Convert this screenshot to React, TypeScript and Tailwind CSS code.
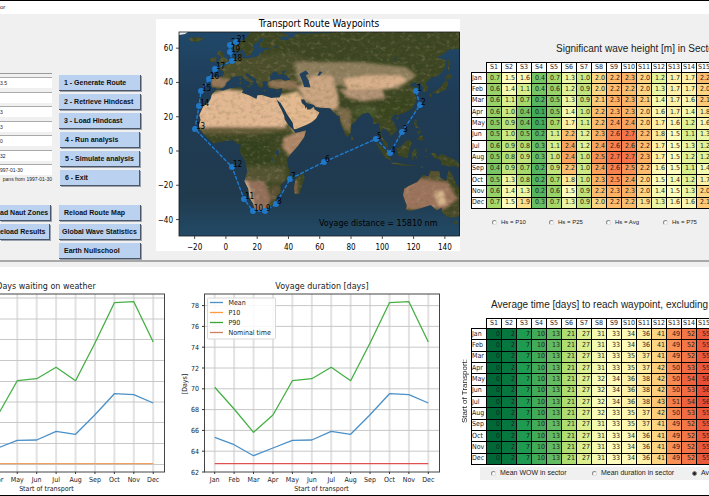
import React from "react";

type Point = [number, number];

const MONTHS = ["Jan", "Feb", "Mar", "Apr", "May", "Jun", "Jul", "Aug", "Sep", "Oct", "Nov", "Dec"];
const SECTORS = Array.from({ length: 15 }, (_, i) => `S${i + 1}`);

const WAVE_HEIGHT: number[][] = [
  [0.7, 1.5, 1.6, 0.4, 0.7, 1.3, 1.0, 2.0, 2.2, 2.3, 2.0, 1.2, 1.7, 1.7, 2.2],
  [0.6, 1.4, 1.1, 0.4, 0.6, 1.2, 0.9, 2.0, 2.2, 2.2, 2.0, 1.3, 1.7, 1.7, 2.0],
  [0.6, 1.1, 0.7, 0.2, 0.5, 1.3, 0.9, 2.1, 2.3, 2.3, 2.1, 1.4, 1.7, 1.6, 2.1],
  [0.6, 1.0, 0.4, 0.1, 0.5, 1.4, 1.0, 2.2, 2.3, 2.3, 2.0, 1.6, 1.7, 1.4, 1.8],
  [0.5, 0.9, 0.4, 0.1, 0.7, 1.7, 1.1, 2.2, 2.4, 2.4, 2.0, 1.7, 1.6, 1.2, 1.6],
  [0.5, 1.0, 0.5, 0.2, 1.1, 2.2, 1.2, 2.3, 2.6, 2.7, 2.2, 1.8, 1.5, 1.1, 1.3],
  [0.6, 0.9, 0.8, 0.3, 1.1, 2.4, 1.2, 2.4, 2.6, 2.6, 2.2, 1.7, 1.5, 1.3, 1.2],
  [0.5, 0.8, 0.9, 0.3, 1.0, 2.4, 1.0, 2.5, 2.7, 2.7, 2.3, 1.7, 1.5, 1.2, 1.2],
  [0.4, 0.9, 0.7, 0.2, 0.9, 2.2, 1.0, 2.4, 2.6, 2.5, 2.2, 1.6, 1.5, 1.1, 1.4],
  [0.5, 1.3, 0.8, 0.2, 0.7, 1.8, 1.0, 2.3, 2.5, 2.4, 2.0, 1.5, 1.4, 1.2, 1.7],
  [0.6, 1.4, 1.3, 0.2, 0.6, 1.5, 0.9, 2.2, 2.3, 2.3, 2.0, 1.4, 1.5, 1.3, 2.0],
  [0.7, 1.5, 1.9, 0.3, 0.7, 1.3, 0.9, 2.0, 2.2, 2.2, 1.9, 1.3, 1.6, 1.6, 2.1],
];

const FIRST_SECTORS = [0, 2, 7, 10, 13, 21, 27];
const TRAVEL_TIME: number[][] = [
  [31, 33, 34, 36, 41, 49, 52, 55],
  [31, 33, 34, 36, 41, 49, 52, 55],
  [31, 33, 35, 37, 41, 49, 52, 55],
  [31, 33, 35, 37, 42, 50, 53, 55],
  [32, 34, 36, 38, 42, 50, 54, 56],
  [32, 34, 36, 38, 42, 50, 53, 56],
  [32, 34, 36, 38, 43, 51, 54, 56],
  [32, 33, 35, 37, 42, 50, 53, 55],
  [31, 33, 35, 37, 41, 49, 52, 55],
  [31, 33, 34, 36, 41, 49, 52, 55],
  [31, 33, 34, 36, 41, 49, 52, 55],
  [31, 33, 34, 36, 41, 49, 52, 55],
].map((row) => [...FIRST_SECTORS, ...row]);

// Green-yellow-red ramp, one stop per tenth.
const RAMP: [number, number, number][] = [
  [0, 104, 55],
  [26, 152, 80],
  [102, 189, 99],
  [166, 217, 106],
  [217, 239, 139],
  [255, 255, 191],
  [254, 224, 139],
  [253, 174, 97],
  [244, 109, 67],
  [215, 48, 39],
  [165, 0, 38],
];

function rampColor(t: number): string {
  const s = Math.max(0, Math.min(0.999, t)) * 10;
  const i = Math.floor(s);
  const c = RAMP[i].map((v, k) => Math.round(v + (RAMP[i + 1][k] - v) * (s - i)));
  return `rgb(${c.join(",")})`;
}

function HeatTable({
  label,
  rows,
  format,
  scale,
}: {
  label: string;
  rows: number[][];
  format: (v: number) => string;
  scale: (v: number) => number;
}) {
  return (
    <table
      aria-label={label}
      className="h-[147px] w-[241px] shrink-0 table-fixed border-collapse font-['DejaVu_Sans_Condensed','DejaVu_Sans',sans-serif] text-[7px] leading-[9px] text-[#222]"
    >
      <thead>
        <tr>
          <td className="p-0" />
          {SECTORS.map((s) => (
            <th key={s} scope="col" className="border border-black bg-white p-0 text-center font-normal">
              {s}
            </th>
          ))}
        </tr>
      </thead>
      <tbody>
        {rows.map((row, r) => (
          <tr key={MONTHS[r]}>
            <th scope="row" className="border border-black bg-white p-0 text-left font-normal">
              {MONTHS[r]}
            </th>
            {row.map((v, c) => (
              <td
                key={c}
                className="border border-black p-0 pr-px text-right"
                style={{ backgroundColor: rampColor(scale(v)) }}
              >
                {format(v)}
              </td>
            ))}
          </tr>
        ))}
      </tbody>
    </table>
  );
}

const lonX = (lon: number) => 69.9 + 1.564 * lon;
const latY = (lat: number) => 132 - 1.714 * lat;
const shape = (pts: Point[]) =>
  "M" + pts.map(([a, b]) => `${lonX(a).toFixed(1)} ${latY(b).toFixed(1)}`).join("L") + "Z";

const LAND: Point[][] = [
  [
    [-9, 37], [-9.5, 39], [-9, 43], [-2, 43.5], [-1, 46], [-4.5, 48.5], [-1.5, 49.5], [1.5, 50.5], [4, 52], [5, 53.3],
    [8, 54], [8.5, 57], [10.5, 57.5], [10, 55], [11, 54], [14, 54], [18, 54.7], [21, 55.5], [21.5, 57.5], [24, 57.5],
    [24, 59], [28, 59.7], [30, 60], [25, 60.2], [22.5, 60.2], [21.5, 61.5], [21.5, 63], [25, 65], [22, 65.8], [21, 64],
    [17.5, 62], [17, 60.5], [18.5, 59.5], [16.5, 57.5], [16, 56], [13, 55.5], [11.5, 58], [10.5, 59.3], [8, 58],
    [5.5, 59], [5, 61.5], [9, 63.8], [13, 66], [15, 68.5], [18, 71], [32, 71], [41, 67], [35, 66.5], [33, 67],
    [37, 64.5], [40, 65], [40, 66], [44, 66.5], [44, 68.5], [54, 68.5], [60, 69], [67, 69], [72, 71], [150, 71],
    [150, 59.5], [143, 59.3], [138, 56], [135, 54.7], [141, 53], [140.5, 49], [138, 46], [135, 43.5], [132, 43],
    [130.5, 42.3], [129.5, 40.8], [127.5, 39.7], [129.4, 37], [129, 35.2], [126.3, 34.5], [126.5, 37.5], [125, 38],
    [124.5, 39.8], [121.5, 38.9], [122, 40.5], [118, 39], [119, 37.3], [122.5, 37.2], [119.5, 35], [121.8, 31.5],
    [121.8, 29], [119.5, 25.5], [117, 23.5], [113.5, 22.2], [110, 21], [108, 21.6], [105.8, 19], [107.5, 16.5],
    [109.2, 13], [109, 11.5], [106.7, 10], [104.8, 8.6], [105, 10.3], [102.5, 12.2], [100.8, 13.4], [100, 12.5],
    [99.3, 10], [100.5, 7.3], [103.3, 4.5], [103.5, 2.5], [104, 1.3], [101.5, 3], [100.3, 5.5], [98.5, 8], [98.7, 12],
    [97.7, 16.5], [95.5, 15.8], [94.3, 16], [94, 19], [92, 21.5], [91, 22.5], [87, 21.5], [85, 19.7], [82.2, 16.7],
    [80.2, 15.5], [80, 13], [79.8, 10.3], [78, 8.2], [76.5, 9], [74.8, 13], [73, 17], [72.7, 20.5], [70.5, 20.8],
    [69, 22.3], [66.7, 25], [61.5, 25.2], [57.5, 25.7], [56, 27], [51.5, 28], [50, 30.2], [48, 30], [48.5, 28],
    [50.3, 26.5], [51, 24.5], [51.5, 26], [52, 24.2], [54, 24.2], [56.2, 26], [56.7, 24.2], [59.8, 22.5], [57.7, 19],
    [55, 17], [52, 15.5], [45, 12.9], [43.4, 12.7], [42.7, 16.5], [39, 21.5], [37, 25], [35, 28], [32.5, 29.9],
    [32.5, 31.2], [34.3, 31.3], [36, 34.5], [36, 36.8], [32.5, 36], [30.5, 36.5], [27.5, 36.8], [26.3, 39],
    [27, 40.5], [29, 41.2], [32, 41.8], [35, 42], [38, 41], [41.5, 41.6], [39, 43.8], [37, 45], [39, 47.2],
    [35, 46.2], [36.5, 45.3], [34, 44.4], [33, 46], [31, 46.6], [29, 45], [28, 43.5], [28.5, 41.5], [26.5, 40.7],
    [24, 40.7], [23, 40.3], [24, 38], [22.5, 36.5], [21.3, 37.5], [19.5, 40], [19.4, 42], [15.5, 44], [13.7, 45.5],
    [12.3, 45], [13.5, 43.5], [16, 41.8], [18.4, 40], [16.8, 40.4], [17, 39], [15.8, 38], [15.6, 40], [12.5, 41.5],
    [10.3, 43.8], [7, 43.6], [3.2, 43], [3, 41.7], [0.3, 40], [-0.5, 38], [-2, 36.8], [-5.5, 36.1], [-6.5, 37],
  ],
  [
    [-6, 35.8], [-2, 35.2], [3, 36.8], [10, 37.3], [11, 35.5], [10.2, 34], [15, 32.4], [19.5, 30.4], [20.2, 32.5],
    [23, 32.7], [29, 31], [32.3, 31.3], [32.5, 29.8], [34, 26.5], [35.7, 23.8], [37.3, 20.5], [37.5, 18.5], [40, 15],
    [43, 12.3], [44.5, 10.5], [51.2, 11.9], [50, 8], [46, 3], [41.5, -1.8], [39, -5], [39.5, -8], [40.6, -11],
    [40.6, -15], [37, -18], [34.8, -20], [35.5, -24], [32.8, -26], [31, -30], [28, -33], [25, -34], [20, -34.8],
    [18.3, -34], [17.5, -31], [15, -27], [14.3, -22], [11.8, -17.5], [13.7, -12], [13, -8], [12, -5], [9, -1],
    [9.5, 3.8], [7, 4.4], [4.5, 6.3], [1, 6], [-4, 5.2], [-7.5, 4.4], [-11, 6.8], [-13.2, 9], [-16.7, 12.5],
    [-17.4, 14.7], [-16.2, 18], [-17, 21], [-14.5, 26], [-11, 28.5], [-9.7, 30.5], [-9, 33],
  ],
  [[49.3, -12], [50.4, -15.7], [47, -25], [44, -25], [43.5, -21.5], [44.5, -16.3]],
  [[-5.5, 50], [1.3, 51.3], [1.7, 52.8], [-1, 54.5], [-2, 57.5], [-4, 58.6], [-6, 57], [-3, 54.5], [-5, 52], [-3, 51.5]],
  [[-10, 52], [-6.3, 52.3], [-6, 55], [-10, 54]],
  [[-24, 65.5], [-22, 66.3], [-16, 66.4], [-14, 65], [-19, 63.5], [-22.5, 64]],
  [
    [114, -22], [113.3, -26], [115.7, -32], [115, -34.2], [118, -35], [124, -33.5], [131, -31.5], [135, -34.8],
    [138, -33], [138, -35.5], [141, -38.2], [146.3, -39], [150, -37.5], [150, -22.5], [147, -19.2], [145.5, -15],
    [142.5, -11], [140.8, -17.5], [137, -15.5], [136.5, -12], [131, -11.5], [129.5, -15], [126, -14], [122.3, -18],
    [117, -20.5],
  ],
  [[145, -41], [148, -41], [147, -43.5]],
  [[131, -1], [134, -1], [135, -3.3], [138, -1.7], [144, -4], [148, -6], [150, -10], [146, -8.7], [143, -9], [138, -8], [137, -5], [133, -4]],
  [[109, 1.5], [111.5, 2.5], [116.8, 7], [119, 5], [117.5, 1], [116, -4], [110.3, -3]],
  [[95.3, 5.6], [100, 2.5], [104, -2], [106, -5.8], [102, -4], [98, 1.5]],
  [[105.3, -6.8], [108.5, -6.7], [114.5, -7.8], [123, -8.4], [114.4, -8.8], [106.5, -7.6]],
  [[119, -5.5], [119, -1], [120.5, 1], [125, 1.5], [121, 0.3], [123, -1], [121.5, -2], [122.5, -5], [120.5, -3]],
  [[127.5, 2], [128.5, 1], [128, -1], [127.5, 0]],
  [[126, -3], [130.5, -3.2], [128, -3.6]],
  [[124, -9.8], [127, -8.6], [125, -9.8]],
  [[120.3, 16], [121, 18.5], [122, 18.3], [121.8, 15], [124, 13], [120.8, 13.8]],
  [[122, 7], [125.5, 9.5], [126.3, 7], [125.3, 5.8]],
  [[122, 11.5], [125, 12], [124, 10], [122.5, 10]],
  [[131, 34], [135, 35.6], [137, 37.3], [140, 40.5], [141.5, 41.3], [142, 39.5], [140.7, 35.7], [137, 34.6], [135.5, 33.6]],
  [[130, 33.5], [132, 33], [131, 31.2], [130, 32]],
  [[140, 41.6], [141.7, 45.4], [145, 43.5], [143, 42]],
  [[142, 46], [142, 53.5], [143.5, 52], [143, 49]],
  [[120, 23], [121.5, 25.2], [121, 22]],
  [[108.7, 19.5], [111, 20], [109.5, 18.2]],
  [[80, 9.7], [81.8, 7], [80.3, 6]],
  [[8.3, 39], [9.7, 41], [9.5, 39]],
  [[8.7, 42], [9.4, 43], [9.4, 41.5]],
  [[12.5, 38], [15.5, 38.2], [15, 36.8]],
  [[23.6, 35.5], [26.3, 35.3], [24.8, 34.9]],
  [[32.4, 35], [34.5, 35.5], [33, 34.6]],
];
const LAND_PATH = LAND.map(shape).join("");

const WATER: Point[][] = [
  [[47, 45], [51, 47], [53, 45.3], [51, 44], [53, 41], [54, 37], [50, 37.3], [49, 40.5]],
  [[31.7, 0.3], [34, 0.4], [33.5, -2.5], [31.8, -2.3]],
  [[103.8, 51.5], [107, 52.5], [109.8, 55.7], [108.5, 53]],
  [[58.5, 44], [60, 46.5], [61.5, 46], [60, 44]],
  [[30, 60], [32, 61.6], [33, 60.3]],
  [[29.3, -4], [30.5, -8.7], [30.8, -8.3], [29.8, -4]],
];
const WATER_PATH = WATER.map(shape).join("");

// Vegetation and desert patches, drawn soft and clipped to the coastline.
const TERRAIN: { color: string; pts: Point[] }[] = [
  { color: "#4a4d2c", pts: [[-10, 55], [45, 57], [60, 50], [45, 42], [25, 38], [-10, 40]] },
  { color: "#8f7f5e", pts: [[44, 52], [85, 52], [115, 49], [122, 44], [110, 36], [76, 38], [46, 40]] },
  { color: "#97795a", pts: [[-10, 43], [2, 42], [0, 37], [-9, 37]] },
  { color: "#927656", pts: [[27, 41], [44, 41], [48, 36], [36, 36], [28, 37]] },
  { color: "#e2b893", pts: [[-20, 14], [-20, 24], [-12, 33], [0, 36], [12, 35], [20, 34], [36, 33], [42, 20], [38, 14], [20, 14]] },
  { color: "#e4b98f", pts: [[33, 32], [46, 35], [52, 27], [62, 23], [56, 14], [43, 11], [38, 20]] },
  { color: "#cba582", pts: [[46, 37], [56, 44], [68, 44], [72, 32], [72, 24], [60, 24], [50, 30]] },
  { color: "#d8b08b", pts: [[75, 42], [90, 44], [112, 44], [116, 41], [104, 36], [92, 36], [78, 35]] },
  { color: "#b29275", pts: [[72, 36], [80, 36], [100, 36], [102, 31], [88, 29], [78, 31]] },
  { color: "#7b6b49", pts: [[70, 26], [80, 24], [80, 12], [76, 12], [73, 18]] },
  { color: "#46542a", pts: [[80, 24], [90, 27], [98, 24], [94, 20], [84, 20]] },
  { color: "#39441f", pts: [[98, 30], [118, 31], [121, 25], [108, 21], [98, 20]] },
  { color: "#655c39", pts: [[-18, 14], [38, 14], [40, 12], [20, 10], [-16, 10]] },
  { color: "#333f1d", pts: [[8, 6], [28, 6], [30, -6], [18, -8], [9, -2]] },
  { color: "#525231", pts: [[12, -9], [38, -9], [38, -18], [12, -18]] },
  { color: "#b08869", pts: [[37, 8], [46, 11], [54, 13], [48, 2], [41, -3], [36, 2]] },
  { color: "#94705a", pts: [[12, -17], [25, -18], [29, -28], [25, -36], [16, -35]] },
  { color: "#d6b496", pts: [[10, -17], [14, -18], [17, -28], [18, -33], [14, -30]] },
  { color: "#5b5134", pts: [[29, -20], [35, -20], [32, -30], [28, -28]] },
  { color: "#80634a", pts: [[43, -16], [46, -17], [46, -26], [43, -26]] },
  { color: "#9c735c", pts: [[110, -19], [125, -16], [142, -18], [148, -28], [140, -34], [114, -34]] },
  { color: "#d8b48c", pts: [[133, -24], [139, -23], [141, -31], [136, -32]] },
  { color: "#58512f", pts: [[125, -11], [143, -11], [142, -15], [128, -16]] },
  { color: "#464a2a", pts: [[140, -38], [150, -39], [150, -25], [147, -32]] },
];

const WAYPOINTS: Point[] = [
  [260, 72], [264, 86], [246, 113], [234, 134], [220, 120], [168, 143], [134, 160], [120, 185], [109, 192], [97, 192],
  [88, 180], [76, 148], [39, 110], [43, 87], [45, 72], [53, 60], [59, 50], [76, 42], [74, 33], [74, 26], [80, 23],
];

function RouteMap() {
  return (
    <svg
      viewBox="0 0 304 232"
      role="img"
      aria-label="Transport Route Waypoints"
      className="block w-full bg-white font-['DejaVu_Sans_Condensed','DejaVu_Sans',sans-serif] text-[8px]"
    >
      <defs>
        <clipPath id="axes">
          <rect x="23" y="13" width="281" height="204" />
        </clipPath>
        <clipPath id="land">
          <path d={LAND_PATH} />
        </clipPath>
        <linearGradient id="sea" x1="0" y1="0" x2="0" y2="1">
          <stop offset="0" stopColor="#20486a" />
          <stop offset="0.3" stopColor="#1f3c56" />
          <stop offset="0.8" stopColor="#203a4e" />
          <stop offset="1" stopColor="#224a66" />
        </linearGradient>
        <filter id="soft" x="-20%" y="-20%" width="140%" height="140%">
          <feGaussianBlur stdDeviation="1.8" />
        </filter>
        <filter id="darkRelief" x="0" y="0" width="100%" height="100%">
          <feTurbulence type="fractalNoise" baseFrequency="0.2 0.26" numOctaves="4" seed="8" />
          <feColorMatrix values="0 0 0 0 0.16  0 0 0 0 0.13  0 0 0 0 0.05  3 0 0 0 -1.4" />
        </filter>
        <filter id="lightRelief" x="0" y="0" width="100%" height="100%">
          <feTurbulence type="fractalNoise" baseFrequency="0.2 0.26" numOctaves="4" seed="21" />
          <feColorMatrix values="0 0 0 0 0.85  0 0 0 0 0.68  0 0 0 0 0.5  0 2.4 0 0 -1.25" />
        </filter>
      </defs>
      <text x="163" y="8" textAnchor="middle" className="text-[10px]">
        Transport Route Waypoints
      </text>
      <g clipPath="url(#axes)">
        <rect x="23" y="13" width="281" height="204" fill="url(#sea)" />
        <g clipPath="url(#land)">
          <rect x="23" y="13" width="281" height="204" fill="#3b4521" />
          <g filter="url(#soft)">
            {TERRAIN.map((t, i) => (
              <path key={i} d={shape(t.pts)} fill={t.color} />
            ))}
          </g>
          <rect x="23" y="13" width="281" height="204" filter="url(#darkRelief)" opacity="0.24" />
          <rect x="23" y="13" width="281" height="204" filter="url(#lightRelief)" opacity="0.22" />
        </g>
        <path d={WATER_PATH} fill="#20405c" />
        <path d="M23 13h9l-3 2-6 1z" fill="#e8edf0" />
      </g>
      <rect x="23" y="13" width="280.5" height="204" fill="none" stroke="#1a1a1a" strokeWidth="0.8" />
      {[-20, 0, 20, 40, 60, 80, 100, 120, 140].map((v) => (
        <g key={v}>
          <path d={`M${lonX(v)} 217v3`} stroke="#222" strokeWidth="0.8" />
          <text x={lonX(v)} y="231" textAnchor="middle">
            {String(v).replace("-", "−")}
          </text>
        </g>
      ))}
      {[60, 40, 20, 0, -20, -40].map((v) => (
        <g key={v}>
          <path d={`M20 ${latY(v)}h3`} stroke="#222" strokeWidth="0.8" />
          <text x="17" y={latY(v) + 3} textAnchor="end">
            {String(v).replace("-", "−")}
          </text>
        </g>
      ))}
      <polyline
        points={WAYPOINTS.map((p) => p.join(",")).join(" ")}
        fill="none"
        stroke="#1f7bd0"
        strokeWidth="1.4"
        strokeDasharray="4 1.5"
      />
      {WAYPOINTS.map(([x, y], i) => (
        <g key={i}>
          <circle cx={x} cy={y} r="3" fill="#1f78c8" />
          <text x={x + 1} y={y}>
            {i + 1}
          </text>
        </g>
      ))}
      <text x="163" y="207" className="font-['DejaVu_Sans',sans-serif]">
        Voyage distance = 15810 nm
      </text>
    </svg>
  );
}

// Series in pixels below the top of the plot area.
const MEAN = [143.3, 150.7, 161.7, 154, 146.3, 146, 137.3, 140.3, 120.7, 99.7, 100.7, 109];
const P90 = [93.3, 115, 138.3, 121, 86.7, 84.7, 73.3, 86.7, 49, 8.7, 7.7, 48];
const FLAT = MEAN.map(() => 169.7);
const TOP = 27;
const STEP = 19.42;

function LineChart({
  width,
  left,
  right,
  firstX,
  title,
  titleX,
  gridY,
  flatColor,
  children,
}: {
  width: number;
  left: number;
  right: number;
  firstX: number;
  title: string;
  titleX: number;
  gridY: number[];
  flatColor: string;
  children?: React.ReactNode;
}) {
  const line = (vals: number[]) => vals.map((v, i) => `${firstX + i * STEP},${TOP + v}`).join(" ");
  const visible = MONTHS.map((m, i) => ({ m, x: firstX + i * STEP })).filter((p) => p.x > -5);
  return (
    <svg
      viewBox={`0 0 ${width} 228`}
      role="img"
      aria-label={title}
      className="block w-full font-['DejaVu_Sans_Condensed','DejaVu_Sans',sans-serif] text-[7px]"
      fill="#222"
    >
      <text x={titleX} y="22" textAnchor="middle" className="font-['DejaVu_Sans',sans-serif] text-[8px]">
        {title}
      </text>
      {visible.map((p) => (
        <path key={p.m} d={`M${p.x} ${TOP}V205`} stroke="#e2e2e2" strokeWidth="2" />
      ))}
      {gridY.map((y) => (
        <path key={y} d={`M${left} ${y}H${right}`} stroke="#c8c8c8" strokeWidth="1" />
      ))}
      <rect x={left} y={TOP} width={right - left} height="178" fill="none" stroke="#444" strokeWidth="1" />
      {visible.map((p) => (
        <g key={p.m}>
          <path d={`M${p.x} 205v2`} stroke="#333" />
          <text x={p.x} y="215" textAnchor="middle">
            {p.m}
          </text>
        </g>
      ))}
      <g fill="none" strokeWidth="1.3" strokeLinejoin="round">
        <polyline points={line(MEAN)} stroke="#4a90c8" />
        <polyline points={line(P90)} stroke="#45b045" />
        <polyline points={line(FLAT)} stroke={flatColor} />
      </g>
      <text x={(firstX + firstX + 11 * STEP) / 2} y="224" textAnchor="middle">
        Start of transport
      </text>
      {children}
    </svg>
  );
}

const LEGEND = [
  { name: "Mean", color: "#4a90c8" },
  { name: "P10", color: "#ff9a40" },
  { name: "P90", color: "#35a835" },
  { name: "Nominal time", color: "#d08060" },
];
const DAY_TICKS = [62, 64, 66, 68, 70, 72, 74, 76, 78];
const dayY = (v: number) => 205 - 10.4 * (v - 62);

function ActionButton({ className = "", children }: { className?: string; children: React.ReactNode }) {
  return (
    <button
      type="button"
      className={`h-4 border-r border-b border-[#4b5768] bg-[#bad2ef] text-[7px] leading-[15px] font-bold whitespace-nowrap text-[#111] shadow-[1px_1px_0_#9aa3ad] ${className}`}
    >
      {children}
    </button>
  );
}

function Choice({
  name,
  label,
  checked,
  className,
}: {
  name: string;
  label: string;
  checked?: boolean;
  className: string;
}) {
  return (
    <label className={`flex shrink-0 items-center gap-1 whitespace-nowrap ${className}`}>
      <input
        type="radio"
        name={name}
        defaultChecked={checked}
        className="size-[5px] appearance-none rounded-full border border-[#888] border-r-[#ddd] border-b-[#ddd] bg-white checked:border-[#888] checked:bg-[#222]"
      />
      {label}
    </label>
  );
}

const FIELDS = [
  { label: "Speed", value: "3.5" },
  { label: "Option", value: "" },
  { label: "Limit", value: "3" },
  { label: "Period", value: "3" },
  { label: "Offset", value: "0" },
  { label: "Years", value: "32" },
  { label: "Start date", value: "997-01-30" },
];

export default function App() {
  return (
    <div className="flex min-h-screen flex-col overflow-hidden border-y border-black bg-white font-['Liberation_Sans',Arial,sans-serif] text-[#222]">
      <header className="h-[13px] text-[6px] leading-[13px]">or</header>

      <section className="grid grid-cols-[156px_304px_minmax(0,1fr)] border-b-2 border-[#a8a8a8] bg-[#f0f0f0]">
        <div className="pt-[59px]">
          <div className="flex items-start justify-between pr-[15px]">
            <div className="flex w-[52px] flex-col border-t border-[#999] pt-[3px] text-[5px] leading-[6px]">
              <div className="flex h-[98px] flex-col justify-between">
                {FIELDS.map((f) => (
                  <input
                    key={f.label}
                    aria-label={f.label}
                    defaultValue={f.value}
                    className="h-[11px] w-full border-t border-[#aaa] bg-white p-0"
                  />
                ))}
              </div>
              <p className="pt-px text-right whitespace-nowrap">pans from 1997-01-30</p>
            </div>
            <div className="mt-[2px] flex w-[82px] flex-col gap-[3px]">
              <ActionButton className="pl-[5px] text-left">1 - Generate Route</ActionButton>
              <ActionButton className="pl-[5px] text-left">2 - Retrieve Hindcast</ActionButton>
              <ActionButton className="pl-[5px] text-left">3 - Load Hindcast</ActionButton>
              <ActionButton className="mx-px pl-[5px] text-left">4 - Run analysis</ActionButton>
              <ActionButton className="mx-px pl-[5px] text-left">5 - Simulate analysis</ActionButton>
              <ActionButton className="mx-px pl-[5px] text-left">6 - Exit</ActionButton>
            </div>
          </div>
          <div className="flex items-start justify-between pt-[19px] pr-[15px]">
            <div className="flex w-[51px] flex-col gap-[3px]">
              <ActionButton className="pr-[3px] text-right">ad Naut Zones</ActionButton>
              <ActionButton className="mr-px pr-[6px] text-right">eload Results</ActionButton>
            </div>
            <div className="flex w-[82px] flex-col gap-[3px]">
              <ActionButton className="pl-[5px] text-left">Reload Route Map</ActionButton>
              <ActionButton className="pl-[3px] text-left">Global Wave Statistics</ActionButton>
              <ActionButton className="pl-[5px] text-left">Earth Nullschool</ActionButton>
            </div>
          </div>
        </div>

        <div className="pt-[5px] pb-[9px]">
          <RouteMap />
        </div>

        <div className="min-w-0 overflow-hidden pt-[29px] pl-[11px]">
          <h2 className="pl-[85px] text-[10px] leading-3 whitespace-nowrap">Significant wave height [m] in Sector</h2>
          <div className="pt-[7px]">
            <HeatTable
              label="Significant wave height in sector"
              rows={WAVE_HEIGHT}
              format={(v) => v.toFixed(1)}
              scale={(v) => 0.13 + 0.245 * v}
            />
          </div>
          <div className="flex pt-[9px] pl-[21px] text-[6px] leading-[9px]">
            <Choice name="hs" label="Hs = P10" className="w-[57px]" />
            <Choice name="hs" label="Hs = P25" className="w-[57px]" />
            <Choice name="hs" label="Hs = Avg" className="w-[57px]" />
            <Choice name="hs" label="Hs = P75" className="w-[57px]" />
          </div>
        </div>
      </section>
      <div className="h-[5px] bg-[#f0f0f0]" />

      <section className="grid grow grid-cols-[175px_280px_minmax(0,1fr)] bg-white">
        <LineChart
          width={175}
          left={-2}
          right={164.5}
          firstX={-60.4}
          title="Days waiting on weather"
          titleX={46}
          gridY={[31, 52, 72.5, 93.5, 114.5, 135, 155.5, 176.5, 197.5]}
          flatColor="#f0a060"
        />

        <LineChart
          width={280}
          left={29.5}
          right={264.5}
          firstX={39.7}
          title="Voyage duration [days]"
          titleX={147}
          gridY={DAY_TICKS.slice(1).map(dayY)}
          flatColor="#e05050"
        >
          {DAY_TICKS.map((v) => (
            <g key={v}>
              <path d={`M27 ${dayY(v)}h2.5`} stroke="#333" />
              <text x="24" y={dayY(v) + 2.5} textAnchor="end">
                {v}
              </text>
            </g>
          ))}
          <text transform="translate(12 117) rotate(-90)" textAnchor="middle">
            [Days]
          </text>
          <rect x="32.5" y="31" width="68" height="41" rx="1" fill="#fff" fillOpacity="0.85" stroke="#d8d8d8" />
          {LEGEND.map((l, i) => (
            <g key={l.name}>
              <path d={`M35 ${35.5 + i * 10}h13`} stroke={l.color} strokeWidth="1.3" />
              <text x="53.5" y={38 + i * 10}>
                {l.name}
              </text>
            </g>
          ))}
        </LineChart>

        <div className="min-w-0 overflow-hidden pt-8">
          <h2 className="pl-9 text-[10px] leading-3 whitespace-nowrap">
            Average time [days] to reach waypoint, excluding
          </h2>
          <div className="flex items-center gap-[2px] pt-[7px] pl-[5px]">
            <span className="w-[9px] shrink-0 rotate-180 text-center text-[8px] leading-[9px] whitespace-nowrap [writing-mode:vertical-rl]">
              Start of Transport:
            </span>
            <HeatTable
              label="Average time to reach waypoint"
              rows={TRAVEL_TIME}
              format={(v) => String(v)}
              scale={(v) => v / 66}
            />
          </div>
          <div className="mt-[2px] ml-[25px] flex h-[13px] items-center bg-[#f0f0f0] pl-[11px] text-[7px]">
            <Choice name="result" label="Mean WOW in sector" className="w-[101px]" />
            <Choice name="result" label="Mean duration in sector" className="w-[100px]" />
            <Choice name="result" label="Average time" checked className="w-[60px]" />
          </div>
        </div>
      </section>
    </div>
  );
}
